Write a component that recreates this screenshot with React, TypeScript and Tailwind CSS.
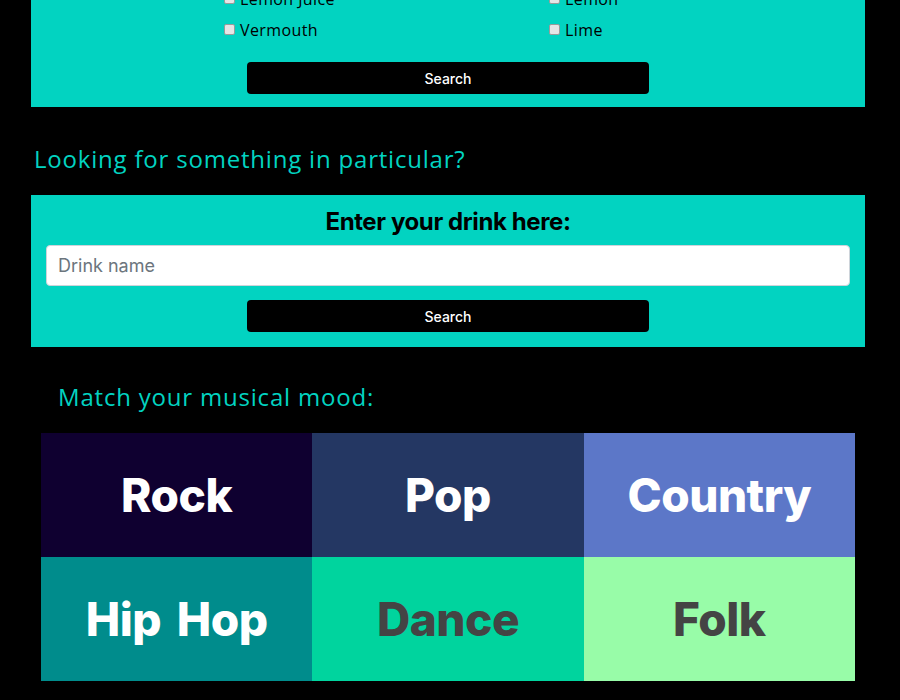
import React from "react";

const ingredientRows: [string, string][] = [
  ["Triple Sec", "Orange"],
  ["Lemon Juice", "Lemon"],
  ["Vermouth", "Lime"],
];

const genres = [
  { name: "Rock", bg: "bg-[#0f0030]", text: "text-white" },
  { name: "Pop", bg: "bg-[#243763]", text: "text-white" },
  { name: "Country", bg: "bg-[#5c77c8]", text: "text-white" },
  { name: "Hip Hop", bg: "bg-[#008c8c]", text: "text-white" },
  { name: "Dance", bg: "bg-[#00d49e]", text: "text-[#444444]" },
  { name: "Folk", bg: "bg-[#98fca8]", text: "text-[#444444]" },
];

function SearchButton() {
  return (
    <button className="mx-auto flex h-8 w-[402px] items-center justify-center rounded-[4px] bg-black text-[14px] font-medium text-white font-['Inter',sans-serif]">
      Search
    </button>
  );
}

export default function App() {
  return (
    <div className="min-h-[700px] w-[900px] overflow-hidden bg-black pb-10 font-['Open_Sans',sans-serif]">
      {/* ingredients panel (scrolled past the top) */}
      <div className="ml-[31px] mt-[-64px] w-[834px] bg-[#02d3c1] pt-4 pb-[13px]">
        <div className="pl-[193px]">
          {ingredientRows.map(([a, b]) => (
            <div key={a} className="grid h-[31px] grid-cols-[325px_1fr] items-center">
              {[a, b].map((item) => (
                <label key={item} className="flex items-center gap-[5px] text-[16px] tracking-[0.4px] text-black">
                  <input
                    type="checkbox"
                    className="h-[11px] w-[11px] appearance-none rounded-[2px] border border-[#9a9a9a] bg-[#e6e6e6]"
                  />
                  {item}
                </label>
              ))}
            </div>
          ))}
        </div>
        <div className="mt-[17px]">
          <SearchButton />
        </div>
      </div>

      <h2 className="ml-[34px] mt-9 mb-5 text-[24px] leading-8 tracking-[0.8px] text-[#02d3c1]">
        Looking for something in particular?
      </h2>

      <div className="ml-[31px] w-[834px] bg-[#02d3c1] px-[15px] pt-[11px] pb-[15px]">
        <h3 className="text-center text-[24px] leading-8 font-bold tracking-[-0.4px] text-black font-['Inter',sans-serif]">
          Enter your drink here:
        </h3>
        <input
          placeholder="Drink name"
          className="mt-[7px] h-[41px] w-full rounded-[4px] border border-[#ced4da] bg-white px-[11px] text-[18px] text-gray-700 outline-none placeholder:text-[#6c757d] font-['Inter',sans-serif]"
        />
        <div className="mt-[14px]">
          <SearchButton />
        </div>
      </div>

      <h2 className="ml-[58px] mt-[34px] mb-5 text-[24px] leading-8 tracking-[0.8px] text-[#02d3c1]">
        Match your musical mood:
      </h2>

      <div className="ml-[41px] grid w-[814px] grid-cols-3">
        {genres.map((g) => (
          <div
            key={g.name}
            className={`flex h-[124px] items-center justify-center ${g.bg}`}
          >
            <span className={`text-[46px] font-extrabold tracking-[-0.5px] [word-spacing:6px] font-['Inter',sans-serif] ${g.text}`}>
              {g.name}
            </span>
          </div>
        ))}
      </div>
    </div>
  );
}
